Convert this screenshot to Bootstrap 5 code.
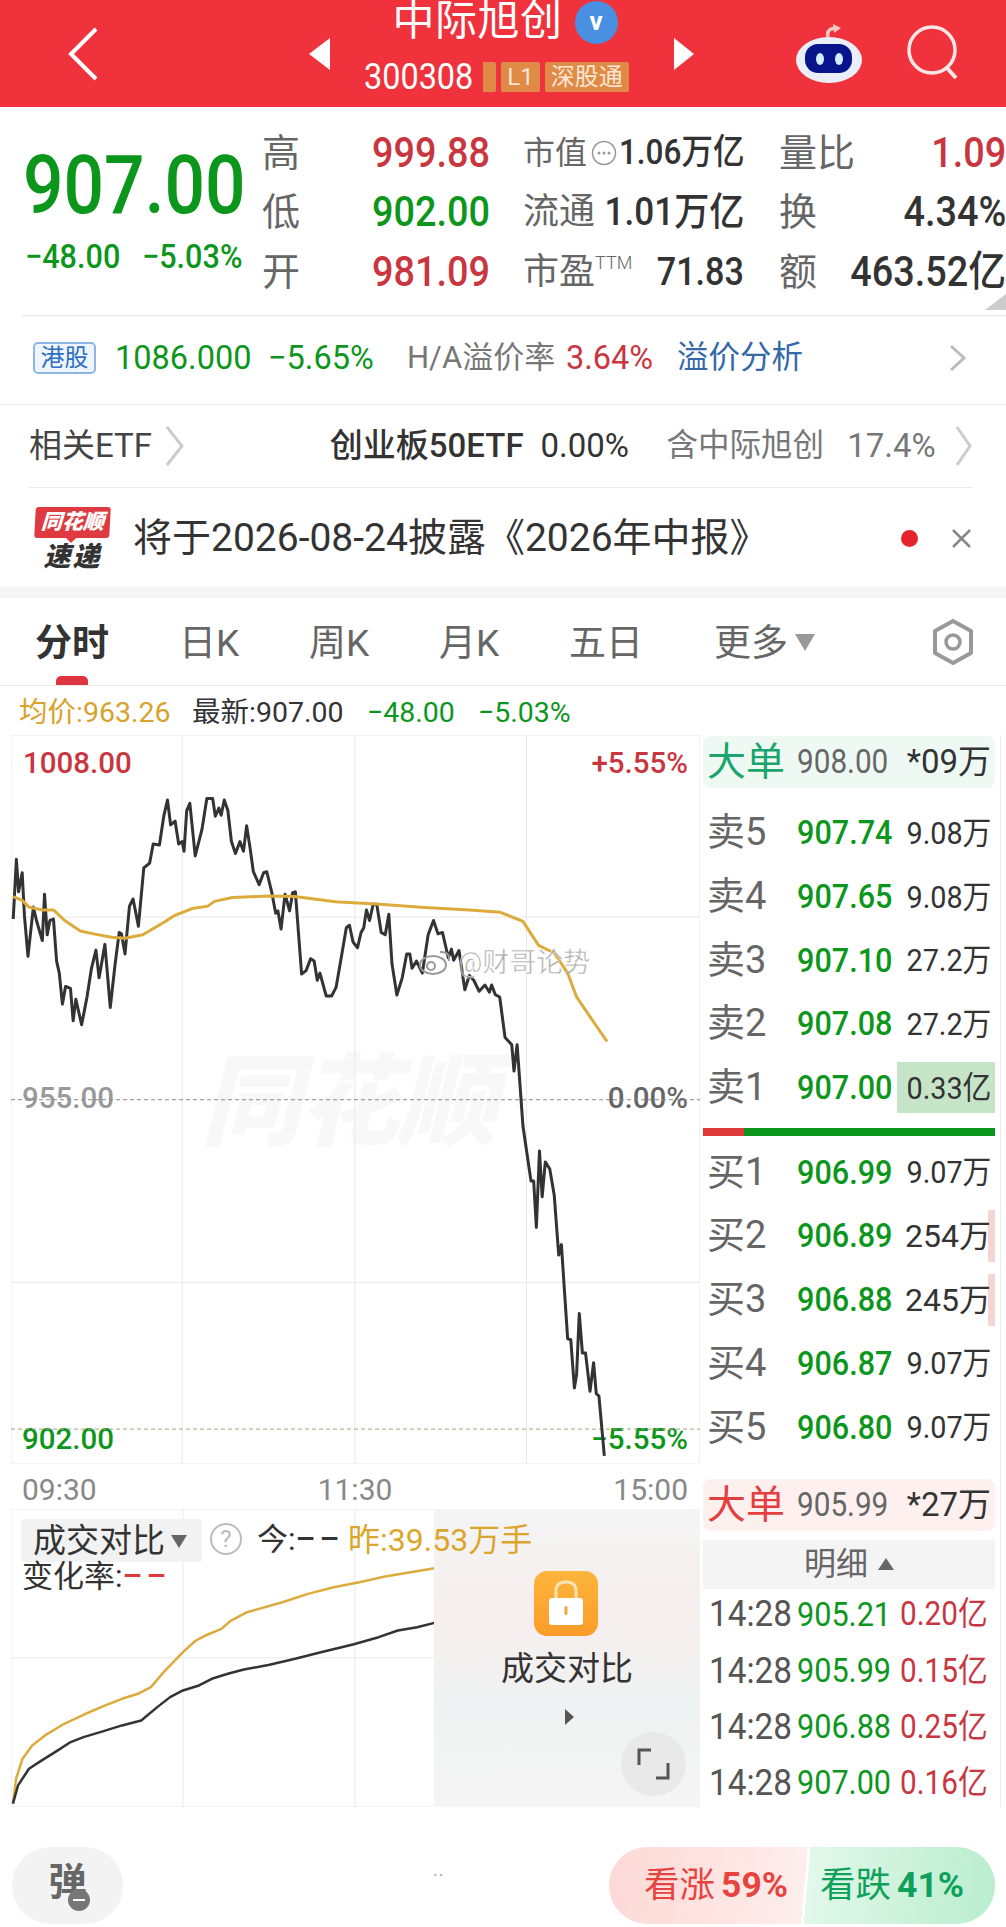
<!DOCTYPE html>
<html lang="zh-CN">
<head>
<meta charset="UTF-8">
<title>中际旭创</title>
<link href="https://cdn.jsdelivr.net/npm/bootstrap@5.3.2/dist/css/bootstrap.min.css" rel="stylesheet">
<style>
body { width:1006px; height:1927px; overflow:hidden; background:#fff; color:#333; font-family:Roboto,"Noto Sans CJK SC",sans-serif; }
.sq-l { display:inline-block; transform:scaleX(.9); transform-origin:left center; white-space:nowrap; }
.sq-r { display:inline-block; transform:scaleX(.9); transform-origin:right center; white-space:nowrap; }
.up { color:#c9363f; }
.down { color:#0c961c; }
.gray { color:#666; }
.appbar { height:107px; background:#ef323b; color:#fff; overflow:hidden; }
.appbar .back { margin-left:65px; width:36px; }
.mid-block { margin-left:208px; width:385px; }
.tri { width:0; height:0; border-top:16px solid transparent; border-bottom:16px solid transparent; }
.tri-l { border-right:21px solid #fff; }
.tri-r { border-left:20px solid #fff; }
.stock-name { font-size:42px; line-height:40px; margin-top:-3px; letter-spacing:.5px; margin-left:6px; }
.v-mark { width:43px; height:43px; border-radius:50%; background:#4a90e2; font:bold 26px/41px Roboto,sans-serif; text-align:center; margin-left:12px; }
.stock-code { font-size:36px; line-height:30px; margin-top:18px; height:30px; margin-left:-8px; }
.stock-code .code { width:108px; margin-left:-3px; }
.tag { background:#e08a47; color:#fbe6d4; font-size:24px; line-height:30px; height:30px; padding:0 6px; border-radius:2px; margin-left:5px; }
.tag-cut { width:13px; padding:0; margin-left:11px; overflow:hidden; border-radius:0 2px 2px 0; }
.appbar .robot { margin-left:101px; }
.appbar .find { margin-left:43px; }

.quote { height:209px; position:relative; border-bottom:1px solid #e6e6e6; margin-left:22px; }
.price-col { width:239px; margin-left:1px; flex:none; }
.big-price { font-size:82px; line-height:80px; font-weight:500; margin-top:38px; height:80px; }
.big-price .sq-l { transform:scaleX(.87); }
.price-chg { font-size:34px; line-height:32px; margin-top:15px; font-weight:500; margin-left:2px; }
.quote-grid { display:grid; grid-template-columns:110px 151px 256px 227px; grid-auto-rows:59.5px; margin-top:16px; align-items:center; }
.q-lab { font-size:38px; color:#666; line-height:1; white-space:nowrap; }
.q-val { font-size:42px; line-height:1; font-weight:500; }
.q-mid { width:221px; font-size:36px; line-height:1; white-space:nowrap; }
.q-mid .cap { color:#666; flex:none; }
.q-mid .cap-sm { font-size:32px; }
.q-mid .num { color:#333; font-weight:500; margin-left:-30px; }
.q-mid .n-35 { font-size:35px; }
.q-mid .n-39 { font-size:39px; }
.q-mid .n-38 { font-size:38px; }
.corner-mark { position:absolute; right:0; bottom:5px; width:0; height:0; border-left:21px solid transparent; border-bottom:16px solid #ccc; }

.hk-row { height:89px; padding:0 39px 4px 33px; font-size:32.5px; border-bottom:1px solid #e9e9e9; }
.hk-tag { width:63px; height:32px; border:2px solid #8db6e6; background:#eef5fd; color:#2f6fc0; font-size:24px; line-height:28px; text-align:center; border-radius:5px; margin-right:19px; }
.hk-row .n1 { width:153px; white-space:nowrap; }
.hk-row .n2 { width:139px; white-space:nowrap; }
.hk-row .n3 { width:159px; color:#777; font-size:31px; white-space:nowrap; }
.hk-row .n4 { width:111px; }
.hk-link { color:#3568a8; font-size:31.5px; }
.etf-row { height:83px; margin:0 33px 0 29px; border-bottom:1px solid #ececec; font-size:33px; white-space:nowrap; }
.etf-row .t1 { width:136px; color:#444; }
.etf-row .t2 { margin-left:145px; width:211px; color:#333; font-weight:500; }
.etf-row .t3 { width:126px; color:#333; }
.etf-row .t4 { color:#777; width:181px; font-size:31.5px; }
.etf-row .t5 { color:#777; width:108px; }
.notice { height:99px; margin-left:35px; margin-right:33px; padding-top:2px; }
.flash-logo { width:75px; font-style:italic; font-weight:900; text-align:center; }
.flash-logo .top { background:#df3a3f; color:#fff; font-size:21px; line-height:31px; height:31px; border-radius:3px; position:relative; transform:skewX(-3deg); }
.flash-logo .top::after { content:""; position:absolute; left:31px; bottom:-5px; border-left:6px solid transparent; border-right:6px solid transparent; border-top:6px solid #df3a3f; }
.flash-logo .bot { color:#333; font-size:27px; line-height:27px; margin-top:6px; letter-spacing:2px; }
.notice-text { font-size:39px; margin-left:23px; width:768px; color:#333; white-space:nowrap; }
.red-dot { width:17px; height:17px; border-radius:50%; background:#e4252c; }
.close-x { margin-left:33px; }
.band { height:11px; background:#f5f5f5; }

.tabbar { height:88px; border-bottom:1px solid #e8e8e8; position:relative; font-size:37px; color:#666; }
.tabbar span { position:absolute; top:22px; line-height:48px; white-space:nowrap; }
.tabbar .on { color:#333; font-weight:700; }
.tabbar i { position:absolute; left:56px; bottom:0; width:32px; height:9px; background:#df3540; border-radius:5px 5px 0 0; }
.tabbar .tri-down { position:absolute; left:795px; top:36px; border-left:10px solid transparent; border-right:10px solid transparent; border-top:17px solid #999; }
.tabbar svg { position:absolute; left:932px; top:21px; }
.info-row { height:49px; margin-left:19px; font-size:28.5px; padding-top:6px; white-space:nowrap; }
.info-row .avg { width:173px; color:#d8a22c; }
.info-row .last { width:175px; }
.info-row .chg { width:111px; }

.main-split { height:1072px; }
.left-col { width:689px; margin-left:11px; flex:none; }
.line-chart { height:729px; position:relative; overflow:hidden; }
.line-chart svg { position:absolute; left:0; top:0; }
.chart-lab { position:absolute; font-size:29.5px; line-height:32px; font-weight:500; white-space:nowrap; }
.mark-ths { position:absolute; left:190px; top:308px; font-size:100px; line-height:120px; font-weight:900; font-style:italic; color:#f8f8f8; white-space:nowrap; letter-spacing:-2px; }
.mark-wb { position:absolute; left:447px; top:212px; font-size:27px; line-height:32px; color:rgba(120,120,120,.6); -webkit-text-stroke:.5px #fff; white-space:nowrap; }
.time-row { height:45px; font-size:30px; color:#888; padding:5px 12px 0 11px; }
.vol-chart { height:298px; position:relative; overflow:hidden; }
.vol-chart > svg { position:absolute; left:0; top:0; }
.vol-chip { position:absolute; left:10px; top:10px; width:181px; height:43px; background:#f2f2f2; border-radius:4px; font-size:33px; line-height:43px; padding-left:12px; color:#333; white-space:nowrap; }
.vol-chip i { display:inline-block; margin-left:6px; vertical-align:4px; border-left:8px solid transparent; border-right:8px solid transparent; border-top:13px solid #666; }
.help-mark { position:absolute; left:199px; top:14px; width:32px; height:32px; border:2px solid #bbb; border-radius:50%; color:#bbb; font-size:24px; line-height:28px; text-align:center; }
.vol-lab { position:absolute; font-size:31px; line-height:36px; white-space:nowrap; }
.vol-lab .wide { letter-spacing:4px; font-weight:500; }
.lock-pane { position:absolute; left:423px; right:0; top:0; bottom:0; background:linear-gradient(180deg,#f4f4f4 0,#f7eeee 35%,#eff2f2 65%,#f6f5f5 100%); }
.lock-tile { position:absolute; left:100px; top:62px; width:64px; height:65px; border-radius:13px; background:linear-gradient(180deg,#fdb53c,#fb9c2a); }
.lock-name { position:absolute; left:0; width:264px; top:138px; text-align:center; font-size:33px; line-height:44px; color:#333; padding-left:2px; }
.lock-arrow { position:absolute; left:131px; top:200px; border-top:8px solid transparent; border-bottom:8px solid transparent; border-left:9px solid #555; }
.expand-btn { position:absolute; left:187px; top:223px; width:65px; height:64px; border-radius:50%; background:#e9e9e9; }

.right-col { width:298px; margin-left:3px; padding-right:5px; border-right:1px solid #ececec; flex:none; }
.big-order { height:52px; margin-top:1px; border-radius:8px; padding:0 4px; font-size:33px; white-space:nowrap; }
.big-order b { font-weight:400; font-size:39px; width:90px; white-space:nowrap; }
.big-order .p { width:100px; color:#666; }
.big-order .v { flex:1; text-align:right; color:#333; }
.big-sell { background:#eff9f4; }
.big-sell b { color:#1ba56c; }
.big-buy { background:#fdf0ef; margin-top:20px; }
.big-buy b { color:#e2403f; }
.book { margin-top:13px; }
.book-row { height:63.7px; position:relative; font-size:34px; white-space:nowrap; }
.book-row .l { width:94px; padding-left:4px; color:#666; font-size:38px; white-space:nowrap; }
.book-row .p { width:100px; color:#0c961c; font-weight:500; }
.book-row .v { flex:1; text-align:right; color:#333; position:relative; z-index:1; padding-right:4px; font-size:32px; }
.book-row .fill { position:absolute; right:0; top:6px; bottom:6px; background:#f5d5d2; }
.book-row .fill-big { width:98px; background:#c6e5c8; }
.book-row .fill-mini { width:7px; }
.split-bar { height:8px; margin:9px 0 4px; background:linear-gradient(90deg,#df3a3a 0,#df3a3a 14%,#0c961c 14%); }
.detail-head { height:49px; margin-top:9px; background:#f4f4f4; font-size:32px; color:#666; }
.detail-head i { margin-left:10px; border-left:8px solid transparent; border-right:8px solid transparent; border-bottom:12px solid #666; }
.ticks { margin-top:-3px; }
.tick-row { height:56.3px; font-size:34px; padding:0 5px 0 6px; white-space:nowrap; }
.tick-row .t { width:88px; color:#555; font-size:37px; flex:none; }
.tick-row .p { width:103px; flex:none; }
.tick-row .q { font-size:33px; }
.footbar { height:79px; margin-top:40px; padding:0 11px 0 12px; }
.danmu { width:111px; height:77px; border-radius:38px; background:#f3f3f3; position:relative; font-size:38px; font-weight:700; color:#666; line-height:70px; text-align:center; }
.danmu i { position:absolute; left:56px; top:42px; width:22px; height:22px; border-radius:50%; background:#777; }
.danmu i::after { content:""; position:absolute; left:5px; top:10px; width:12px; height:2px; background:#fff; }
.dots { color:#aaa; font-size:18px; line-height:1; letter-spacing:1px; margin-left:310px; margin-top:20px; }
.vote { width:386px; height:77px; border-radius:38px; margin-left:auto; font-size:35.5px; background:linear-gradient(95deg,#fdd9d6 0,#fdeeec 50.6%,#fff 50.6%,#fff 51.3%,#e2f8ea 51.3%,#b9edce 100%); }
.vote .a { width:197px; padding-left:35px; color:#e7443f; white-space:nowrap; }
.vote .b { padding-left:14px; color:#0fa05a; white-space:nowrap; }
.vote b { font-weight:700; margin-left:6px; }
</style>
</head>
<body>

<div class="appbar d-flex align-items-center">
  <svg class="back" height="56" viewBox="0 0 36 56"><path d="M31 3 L6 28 L31 53" fill="none" stroke="#fff" stroke-width="4"/></svg>
  <div class="mid-block d-flex align-items-center justify-content-between">
    <div class="tri tri-l"></div>
    <div class="d-flex flex-column align-items-center" style="margin-top:-14px">
      <div class="d-flex align-items-center"><span class="stock-name">中际旭创</span><span class="v-mark">v</span></div>
      <div class="stock-code d-flex align-items-center"><span class="code sq-l">300308</span><span class="tag tag-cut"></span><span class="tag">L1</span><span class="tag">深股通</span></div>
    </div>
    <div class="tri tri-r"></div>
  </div>
  <svg class="robot" width="68" height="60" viewBox="0 0 68 60">
    <path d="M33 13 Q31 5 40 4" fill="none" stroke="#f9c7bf" stroke-width="3.5"/><path d="M38 0 L46 4 L39 9 Z" fill="#f9c7bf"/>
    <ellipse cx="34" cy="36" rx="33" ry="23" fill="#e9eef8"/>
    <rect x="10" y="20" width="47" height="29" rx="13" fill="#07148c"/>
    <ellipse cx="25" cy="35" rx="4" ry="6" fill="#d5ecff"/><ellipse cx="44" cy="35" rx="4" ry="6" fill="#d5ecff"/>
  </svg>
  <svg class="find" width="54" height="58" viewBox="0 0 54 58"><circle cx="26" cy="25" r="23" fill="none" stroke="#ffe6e6" stroke-width="3.5"/><path d="M41 43 L50 53" stroke="#ffe6e6" stroke-width="4"/></svg>
</div>

<div class="quote d-flex">
  <div class="price-col">
    <div class="big-price down"><span class="sq-l">907.00</span></div>
    <div class="price-chg down d-flex"><span class="sq-l" style="width:117px">−48.00</span><span class="sq-l">−5.03%</span></div>
  </div>
  <div class="quote-grid">
    <div class="q-lab">高</div><div class="q-val up"><span class="sq-l">999.88</span></div>
    <div class="q-mid d-flex align-items-center justify-content-between"><span class="cap cap-sm d-flex align-items-center">市值<svg class="ms-1" width="26" height="26" viewBox="0 0 26 26"><circle cx="13" cy="13" r="11.5" fill="none" stroke="#999" stroke-width="1.5"/><circle cx="8" cy="13" r="1.5" fill="#999"/><circle cx="13" cy="13" r="1.5" fill="#999"/><circle cx="18" cy="13" r="1.5" fill="#999"/></svg></span><span class="num n-35 sq-r">1.06万亿</span></div>
    <div class="d-flex justify-content-between align-items-center"><span class="q-lab">量比</span><span class="q-val up sq-r">1.09</span></div>
    <div class="q-lab">低</div><div class="q-val down"><span class="sq-l">902.00</span></div>
    <div class="q-mid d-flex align-items-center justify-content-between"><span class="cap">流通</span><span class="num n-39 sq-r">1.01万亿</span></div>
    <div class="d-flex justify-content-between align-items-center"><span class="q-lab">换</span><span class="q-val sq-r">4.34%</span></div>
    <div class="q-lab">开</div><div class="q-val up"><span class="sq-l">981.09</span></div>
    <div class="q-mid d-flex align-items-center justify-content-between"><span class="cap">市盈<small class="align-top" style="font-size:18px;font-weight:300">TTM</small></span><span class="num n-38 sq-r">71.83</span></div>
    <div class="d-flex justify-content-between align-items-center"><span class="q-lab">额</span><span class="q-val sq-r">463.52亿</span></div>
  </div>
  <div class="corner-mark"></div>
</div>

<div class="hk-row d-flex align-items-center">
  <div class="hk-tag">港股</div>
  <div class="n1 down">1086.000</div><div class="n2 down">−5.65%</div>
  <div class="n3">H/A溢价率</div><div class="n4 up">3.64%</div>
  <div class="hk-link">溢价分析</div>
  <svg class="ms-auto" width="19" height="30" viewBox="0 0 19 30"><path d="M3 3 L16 15 L3 27" fill="none" stroke="#bbb" stroke-width="3"/></svg>
</div>

<div class="etf-row d-flex align-items-center">
  <div class="t1">相关ETF</div>
  <svg width="20" height="42" viewBox="0 0 20 42"><path d="M2 2 L17 21 L2 40" fill="none" stroke="#ccc" stroke-width="3"/></svg>
  <div class="t2">创业板50ETF</div><div class="t3">0.00%</div>
  <div class="t4">含中际旭创</div><div class="t5">17.4%</div>
  <svg width="18" height="42" viewBox="0 0 18 42"><path d="M2 2 L15 21 L2 40" fill="none" stroke="#ccc" stroke-width="3"/></svg>
</div>

<div class="notice d-flex align-items-center">
  <div class="flash-logo"><div class="top">同花顺</div><div class="bot">速递</div></div>
  <div class="notice-text">将于2026-08-24披露《2026年中报》</div>
  <div class="red-dot"></div>
  <svg class="close-x" width="21" height="21" viewBox="0 0 21 21"><path d="M2 2 L19 19 M19 2 L2 19" stroke="#888" stroke-width="2.5"/></svg>
</div>
<div class="band"></div>

<div class="tabbar">
  <span class="on" style="left:35px">分时</span><span style="left:179px">日K</span><span style="left:309px">周K</span><span style="left:439px">月K</span><span style="left:569px">五日</span><span style="left:714px">更多</span>
  <div class="tri-down"></div>
  <svg width="42" height="46" viewBox="0 0 42 46"><path d="M21 2 L39 12 L39 34 L21 44 L3 34 L3 12 Z" fill="none" stroke="#999" stroke-width="4" stroke-linejoin="round"/><circle cx="21" cy="23" r="7" fill="none" stroke="#999" stroke-width="3.5"/></svg>
  <i></i>
</div>
<div class="info-row d-flex align-items-center">
  <div class="avg">均价:963.26</div><div class="last">最新:907.00</div><div class="chg down">−48.00</div><div class="down">−5.03%</div>
</div>

<div class="main-split d-flex">
  <div class="left-col">
    <div class="line-chart">
      <div class="mark-ths">同花顺</div>
      <div class="chart-lab up" style="left:12px;top:12px">1008.00</div>
      <div class="chart-lab up" style="right:12px;top:12px">+5.55%</div>
      <div class="chart-lab" style="left:11px;top:347px;color:#999">955.00</div>
      <div class="chart-lab gray" style="right:12px;top:347px">0.00%</div>
      <div class="chart-lab down" style="left:11px;top:688px">902.00</div>
      <div class="chart-lab down" style="right:12px;top:688px">−5.55%</div>
      <svg width="689" height="729" viewBox="25 12 1541 1525" preserveAspectRatio="none">
        <g fill="none">
          <path d="M25 12 H1566 V1537 H25 Z M408 12 V1537 M794 12 V1537 M1178 12 V1537 M25 393 H1566 M25 1157 H1566" stroke="#e8e8e8" stroke-width="1" vector-effect="non-scaling-stroke"/>
          <path d="M25 775 H1566" stroke="#888" stroke-width="1" stroke-dasharray="4 3" vector-effect="non-scaling-stroke"/>
          <path d="M25 1464 H1566" stroke="#a5a57a" stroke-width="1" stroke-dasharray="4 3" vector-effect="non-scaling-stroke"/>
          <polyline stroke="#333" stroke-width="3" stroke-linejoin="round" vector-effect="non-scaling-stroke" points="30,397 37,272 42,340 50,300 55,390 63,475 75,372 82,400 95,442 100,345 106,430 112,400 120,397 127,485 133,510 140,575 147,538 158,542 164,610 170,565 183,618 195,560 205,500 215,462 222,520 235,450 247,582 258,490 267,425 272,428 280,470 290,370 298,355 310,412 322,290 335,280 343,240 357,242 367,180 375,148 382,200 392,192 400,240 408,235 412,255 418,170 425,155 437,265 452,210 463,145 476,145 482,182 490,165 495,180 502,148 510,170 518,235 527,260 537,235 545,255 552,202 560,250 567,298 580,325 590,300 597,298 608,340 617,385 622,380 629,418 638,345 648,380 655,342 661,340 675,512 685,505 695,480 703,485 710,525 716,510 730,558 742,558 752,540 765,470 775,415 782,410 790,445 800,457 808,425 814,415 820,378 827,400 835,366 843,366 853,425 862,430 870,387 877,490 888,556 900,520 910,470 917,470 922,500 932,485 945,510 958,430 970,400 980,428 990,425 1003,478 1010,460 1015,483 1027,463 1040,545 1050,515 1060,525 1072,548 1085,535 1095,550 1100,535 1108,555 1118,560 1130,645 1145,660 1150,715 1157,660 1170,830 1188,945 1194,945 1200,1042 1207,882 1213,978 1220,905 1230,920 1240,975 1250,1100 1256,1078 1270,1275 1277,1277 1285,1378 1290,1350 1296,1222 1303,1305 1310,1305 1320,1385 1328,1325 1334,1390 1340,1395 1352,1520"/>
          <polyline stroke="#dcab3c" stroke-width="3" stroke-linejoin="round" vector-effect="non-scaling-stroke" points="30,350 50,358 65,372 95,378 120,378 145,400 180,422 210,428 250,435 280,437 320,430 370,402 390,390 430,375 465,370 480,360 520,352 600,349 660,350 750,361 850,366 950,373 1050,378 1120,383 1170,402 1205,452 1240,468 1270,510 1290,560 1330,615 1358,653"/>
        </g>
      </svg>
      <svg style="left:407px;top:211px" width="36" height="30" viewBox="0 0 36 30"><ellipse cx="15" cy="19" rx="13" ry="9" fill="none" stroke="#999" stroke-width="2"/><circle cx="13" cy="20" r="4" fill="none" stroke="#999" stroke-width="2"/><path d="M22 6 Q32 5 31 15" fill="none" stroke="#999" stroke-width="2"/></svg>
      <div class="mark-wb">@财哥论势</div>
    </div>
    <div class="time-row d-flex align-items-center justify-content-between"><span>09:30</span><span>11:30</span><span>15:00</span></div>
    <div class="vol-chart">
      <svg width="689" height="298" viewBox="17 90 1074 895" preserveAspectRatio="none">
        <path d="M17 90 H1091 V985 H17 Z M285 90 V985 M553 90 V985 M17 537 H1091" fill="none" stroke="#e8e8e8" stroke-width="1" vector-effect="non-scaling-stroke"/>
        <polyline fill="none" stroke="#dcab3c" stroke-width="2.5" stroke-linejoin="round" vector-effect="non-scaling-stroke" points="20,975 25,900 35,840 50,800 70,770 100,735 130,708 160,683 190,660 215,645 235,625 255,580 285,520 305,485 320,470 345,450 360,425 385,400 440,370 480,345 520,325 560,310 600,293 640,280 677,268"/>
        <polyline fill="none" stroke="#333" stroke-width="2.5" stroke-linejoin="round" vector-effect="non-scaling-stroke" points="20,975 28,920 45,870 65,845 90,815 110,790 130,775 160,758 190,740 220,725 245,685 265,655 285,635 310,620 330,600 355,585 380,572 420,558 460,540 500,520 550,497 590,475 620,455 650,445 677,432"/>
      </svg>
      <div class="lock-pane">
        <div class="lock-tile">
          <svg width="64" height="65" viewBox="0 0 64 65"><path d="M22 28 V20 Q22 11 32 11 Q42 11 42 20 V28" fill="none" stroke="#fde3b4" stroke-width="3"/><rect x="15" y="27" width="34" height="27" rx="3" fill="#fff"/><rect x="30.5" y="35" width="3" height="9" rx="1.5" fill="#f6a53a"/></svg>
        </div>
        <div class="lock-name">成交对比</div>
        <div class="lock-arrow"></div>
        <div class="expand-btn"><svg width="65" height="64" viewBox="0 0 65 64"><path d="M18 33 V18 H30 M47 31 V46 H35" fill="none" stroke="#555" stroke-width="3"/></svg></div>
      </div>
      <div class="vol-chip">成交对比<i></i></div>
      <div class="help-mark">?</div>
      <div class="vol-lab" style="left:246px;top:13px">今:<span class="wide">––</span></div>
      <div class="vol-lab" style="left:337px;top:13px;color:#dca62d;font-size:32px">昨:39.53万手</div>
      <div class="vol-lab" style="left:11px;top:50px">变化率:<span class="wide" style="color:#df3a3a">––</span></div>
    </div>
  </div>

  <div class="right-col">
    <div class="big-order big-sell d-flex align-items-center"><b>大单</b><span class="p sq-l">908.00</span><span class="v">*09万</span></div>
    <div class="book">
      <div class="book-row d-flex align-items-center"><span class="l">卖5</span><span class="p sq-l">907.74</span><span class="v"><span class="sq-r">9.08万</span></span></div>
      <div class="book-row d-flex align-items-center"><span class="l">卖4</span><span class="p sq-l">907.65</span><span class="v"><span class="sq-r">9.08万</span></span></div>
      <div class="book-row d-flex align-items-center"><span class="l">卖3</span><span class="p sq-l">907.10</span><span class="v"><span class="sq-r">27.2万</span></span></div>
      <div class="book-row d-flex align-items-center"><span class="l">卖2</span><span class="p sq-l">907.08</span><span class="v"><span class="sq-r">27.2万</span></span></div>
      <div class="book-row d-flex align-items-center"><span class="l">卖1</span><span class="p sq-l">907.00</span><div class="fill fill-big"></div><span class="v"><span class="sq-r">0.33亿</span></span></div>
    </div>
    <div class="split-bar"></div>
    <div class="book-row d-flex align-items-center"><span class="l">买1</span><span class="p sq-l">906.99</span><span class="v"><span class="sq-r">9.07万</span></span></div>
    <div class="book-row d-flex align-items-center"><span class="l">买2</span><span class="p sq-l">906.89</span><div class="fill fill-mini"></div><span class="v">254万</span></div>
    <div class="book-row d-flex align-items-center"><span class="l">买3</span><span class="p sq-l">906.88</span><div class="fill fill-mini"></div><span class="v">245万</span></div>
    <div class="book-row d-flex align-items-center"><span class="l">买4</span><span class="p sq-l">906.87</span><span class="v"><span class="sq-r">9.07万</span></span></div>
    <div class="book-row d-flex align-items-center"><span class="l">买5</span><span class="p sq-l">906.80</span><span class="v"><span class="sq-r">9.07万</span></span></div>
    <div class="big-order big-buy d-flex align-items-center"><b>大单</b><span class="p sq-l">905.99</span><span class="v">*27万</span></div>
    <div class="detail-head d-flex align-items-center justify-content-center">明细<i></i></div>
    <div class="ticks">
      <div class="tick-row d-flex align-items-center"><span class="t sq-l">14:28</span><span class="p down sq-l">905.21</span><span class="q up sq-l">0.20亿</span></div>
      <div class="tick-row d-flex align-items-center"><span class="t sq-l">14:28</span><span class="p down sq-l">905.99</span><span class="q up sq-l">0.15亿</span></div>
      <div class="tick-row d-flex align-items-center"><span class="t sq-l">14:28</span><span class="p down sq-l">906.88</span><span class="q up sq-l">0.25亿</span></div>
      <div class="tick-row d-flex align-items-center"><span class="t sq-l">14:28</span><span class="p down sq-l">907.00</span><span class="q up sq-l">0.16亿</span></div>
    </div>
  </div>
</div>

<div class="footbar d-flex">
  <div class="danmu">弹<i></i></div>
  <div class="dots">··</div>
  <div class="vote d-flex align-items-center"><div class="a">看涨<b>59%</b></div><div class="b">看跌<b>41%</b></div></div>
</div>

<script src="https://cdn.jsdelivr.net/npm/bootstrap@5.3.2/dist/js/bootstrap.bundle.min.js"></script>
</body>
</html>
